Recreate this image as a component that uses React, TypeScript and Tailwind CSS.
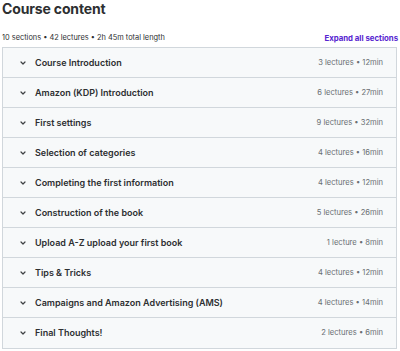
import React from "react"

const sections = [
  { title: "Course Introduction", meta: "3 lectures • 12min" },
  { title: "Amazon (KDP) Introduction", meta: "6 lectures • 27min" },
  { title: "First settings", meta: "9 lectures • 32min" },
  { title: "Selection of categories", meta: "4 lectures • 16min" },
  { title: "Completing the first information", meta: "4 lectures • 12min" },
  { title: "Construction of the book", meta: "5 lectures • 26min" },
  { title: "Upload A-Z upload your first book", meta: "1 lecture • 8min" },
  { title: "Tips & Tricks", meta: "4 lectures • 12min" },
  { title: "Campaigns and Amazon Advertising (AMS)", meta: "4 lectures • 14min" },
  { title: "Final Thoughts!", meta: "2 lectures • 6min" },
]

const Chevron = () => (
  <svg width="6" height="4" viewBox="0 0 6 4" fill="none" stroke="#3e4143" strokeWidth="1.2" strokeLinecap="round" strokeLinejoin="round">
    <polyline points="1 1 3 3 5 1" />
  </svg>
)

const App = () => {
  return (
    <div className="w-[400px] h-[351px] bg-white px-[2px] font-['Inter',sans-serif] text-[#2d2f31]">
      <h2 className="text-[14px] leading-[17px] font-bold tracking-[-0.15px]">Course content</h2>
      <div className="mt-[15px] flex items-center justify-between leading-[12px]">
        <span className="text-[7.4px] text-[#2d2f31]">10 sections • 42 lectures • 2h 45m total length</span>
        <span className="text-[7.8px] font-bold text-[#5624d0]">Expand all sections</span>
      </div>
      <div className="mt-[3px] w-[395px] border border-[#d1d7dc]">
        {sections.map((s, i) => (
          <div
            key={i}
            className={
              "flex h-[30px] items-center bg-[#f7f9fa] pl-[17px] pr-[13px] " +
              (i < sections.length - 1 ? "border-b border-[#d1d7dc]" : "")
            }
          >
            <Chevron />
            <span className="ml-[9px] flex-1 text-[9px] font-semibold">{s.title}</span>
            <span className="text-[7.6px] text-[#6a6f73]">{s.meta}</span>
          </div>
        ))}
      </div>
    </div>
  )
}

export default App
